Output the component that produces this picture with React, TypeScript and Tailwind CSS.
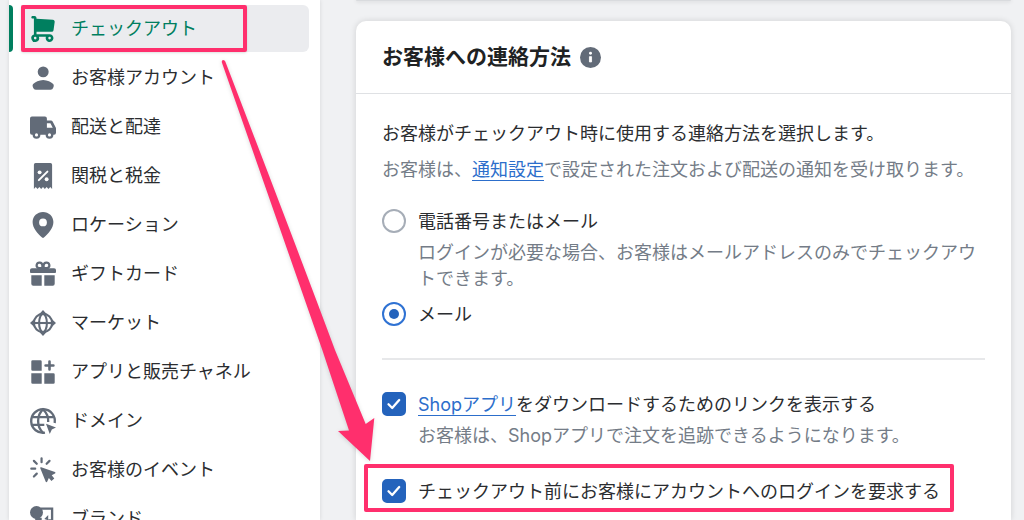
import React from "react";
import clsx from "clsx";

interface NavItem {
  label: string;
  icon: React.ReactNode;
  active?: boolean;
}

const navItems: NavItem[] = [
  {
    label: "チェックアウト",
    active: true,
    icon: (
      <path
        fillRule="evenodd"
        d="M1 1c0-.55.45-1 1-1h1.5C4.330 0 5 .67 5 1.500v.7l12.600.6c.9.05 1.500.850 1.400 1.700l-.9 6.400a1.500 1.500 0 0 1-1.500 1.300H5V14h10.060a3 3 0 1 1-2.850 2H6.850A3 3 0 1 1 3 14.170V2H2C1.450 2 1 1.550 1 1zM14.060 17a1 1 0 1 0 2 0 1 1 0 0 0-2 0zM3 17a1 1 0 1 0 2 0 1 1 0 0 0-2 0z"
      />
    ),
  },
  {
    label: "お客様アカウント",
    icon: (
      <path d="M14.363 5.22a4.22 4.22 0 1 1-8.439 0 4.22 4.22 0 0 1 8.439 0zM2.67 14.469c1.385-1.09 4.141-2.853 7.474-2.853 3.332 0 6.089 1.764 7.474 2.853.618.486.81 1.308.567 2.056l-.333 1.02a2.11 2.11 0 0 1-2.005 1.455h-11.406a2.11 2.11 0 0 1-2.005-1.455l-.333-1.02c-.245-.748-.052-1.57.567-2.056z" />
    ),
  },
  {
    label: "配送と配達",
    icon: (
      <path
        fillRule="evenodd"
        d="M1.5 2A1.5 1.5 0 0 0 0 3.5v11A1.5 1.5 0 0 0 1.5 16H2a3 3 0 1 0 6 0h4a3 3 0 1 0 6 0h.5a1.5 1.5 0 0 0 1.5-1.5v-3.4a2 2 0 0 0-.2-.8l-2.4-4.5A1.5 1.5 0 0 0 16 5h-3V3.5A1.5 1.5 0 0 0 11.5 2zM13 7.2h2.7l1.8 3.3H13zM5 14.9a1.2 1.2 0 1 1 0 2.4 1.2 1.2 0 0 1 0-2.4zM15 14.9a1.2 1.2 0 1 1 0 2.4 1.2 1.2 0 0 1 0-2.4z"
      />
    ),
  },
  {
    label: "関税と税金",
    icon: (
      <>
        <path d="M3 1.3A1.3 1.3 0 0 1 4.3 0h11.4A1.3 1.3 0 0 1 17 1.3V20l-1.4-1.5L14.2 20l-1.4-1.5L11.4 20 10 18.5 8.6 20l-1.4-1.5L5.8 20l-1.4-1.5L3 20z" />
        <path d="M13.4 6.6 6.8 13.2" stroke="#fff" strokeWidth="1.5" strokeLinecap="round" />
        <circle cx="7.4" cy="7.2" r="1.5" fill="#fff" />
        <circle cx="12.8" cy="12.5" r="1.5" fill="#fff" />
      </>
    ),
  },
  {
    label: "ロケーション",
    icon: (
      <path
        fillRule="evenodd"
        d="M10 0C5.6 0 2 3.3 2 7.7 2 12.5 5.8 16.4 9.3 19.7a1 1 0 0 0 1.4 0C14.2 16.4 18 12.5 18 7.7 18 3.3 14.4 0 10 0zm0 11a3 3 0 1 1 0-6 3 3 0 0 1 0 6z"
      />
    ),
  },
  {
    label: "ギフトカード",
    icon: (
      <>
        <path d="M9.5 5.5H6.5A2.2 2.2 0 1 1 9.5 3.3zM10.5 5.5h3a2.2 2.2 0 1 0-3-2.2z" fill="none" stroke="currentColor" strokeWidth="1.7" />
        <path d="M1.5 5.5h17A1.5 1.5 0 0 1 20 7v1.5a.7.7 0 0 1-.7.7H.7A.7.7 0 0 1 0 8.5V7a1.5 1.5 0 0 1 1.5-1.5zM1 11h8v8H2.5A1.5 1.5 0 0 1 1 17.5zM11 11h8v6.5a1.5 1.5 0 0 1-1.5 1.5H11z" />
      </>
    ),
  },
  {
    label: "マーケット",
    icon: (
      <>
        <g fill="none" stroke="currentColor" strokeWidth="1.6">
          <circle cx="10" cy="10" r="7" />
          <ellipse cx="10" cy="10" rx="3" ry="7" />
          <path d="M2 10h16" />
        </g>
        <path d="m10 0 3 3.3H7zM10 20l3-3.3H7zM0 10l3.3-3v6zM20 10l-3.3-3v6z" />
      </>
    ),
  },
  {
    label: "アプリと販売チャネル",
    icon: (
      <path d="M2 1h6a1 1 0 0 1 1 1v7H2a1 1 0 0 1-1-1V2a1 1 0 0 1 1-1zM1 11h8v8H2a1 1 0 0 1-1-1zM11 11h7a1 1 0 0 1 1 1v6a1 1 0 0 1-1 1h-7zM14 2a1 1 0 1 1 2 0v2h2a1 1 0 1 1 0 2h-2v2a1 1 0 1 1-2 0V6h-2a1 1 0 1 1 0-2h2z" />
    ),
  },
  {
    label: "ドメイン",
    icon: (
      <>
        <g fill="none" stroke="currentColor" strokeWidth="1.8">
          <path d="M19 11.5A9.1 9.1 0 1 0 11.5 19" />
          <path d="M10 19c-5-4.5-5-13.5 0-18 3 2.7 4.2 6 4 9.8M1.8 7h16.4M1.8 13H11" />
        </g>
        <path d="M12.3 12.2 20 15l-3.2 1.5L15.2 20z" />
      </>
    ),
  },
  {
    label: "お客様のイベント",
    icon: (
      <>
        <path d="M8.9 1v3M3 3l2.2 2.2M15 3l-2.2 2.2M1 9h3M3 15l2.2-2.2" stroke="currentColor" strokeWidth="1.7" strokeLinecap="round" />
        <path d="M8.6 7.8 19.2 11.6a.6.6 0 0 1 0 1.1L16.7 14l2 2.5-2.2 2-2-2.4-1.3 3a.6.6 0 0 1-1.1 0L7.9 8.6a.6.6 0 0 1 .7-.8z" />
      </>
    ),
  },
  {
    label: "ブランド",
    icon: (
      <>
        <circle cx="5" cy="5" r="5" />
        <path d="M8 2h9v9h-3" fill="none" stroke="currentColor" strokeWidth="1.8" />
        <path d="M11 10l3-3v4zM4 9h5v8H4zM11 12h8v7h-8z" />
      </>
    ),
  },
];

function SideNav() {
  return (
    <aside className="ml-[9px] w-[311px] shrink-0 bg-white shadow-[0_0_4px_rgba(23,24,24,0.12)]">
      <nav className="flex flex-col gap-[2px] pt-[5px] pr-[11px]">
        {navItems.map((item) => (
          <div key={item.label} className="flex h-[47px] gap-2">
            <span className={clsx("w-1 rounded-r-sm", item.active && "bg-[#007f5f]")} />
            <a
              href="#"
              className={clsx(
                "relative flex flex-1 items-center gap-[15px] rounded-r-md pt-px pl-[9px]",
                item.active ? "bg-[#ebecef] text-[#007f5f]" : "text-[#2b2d30]"
              )}
            >
              <svg
                viewBox="0 0 20 20"
                aria-hidden="true"
                className={clsx("size-[26px] shrink-0 overflow-visible fill-current", !item.active && "text-[#626b78]")}
              >
                {item.icon}
              </svg>
              {item.label}
              {item.active && (
                <span className="absolute inset-y-0 left-0 w-[226px] rounded-xs border-4 border-[#ff2f6d] shadow-sm" />
              )}
            </a>
          </div>
        ))}
      </nav>
    </aside>
  );
}

interface OptionProps {
  id: string;
  label: React.ReactNode;
  help?: string;
  defaultChecked?: boolean;
}

function RadioOption({ id, label, help, defaultChecked }: OptionProps) {
  return (
    <div className="flex gap-3">
      <input
        type="radio"
        id={id}
        name="contact"
        defaultChecked={defaultChecked}
        className="flex size-6 shrink-0 appearance-none items-center justify-center rounded-full border-2 border-[#a6adb7] bg-white checked:border-[#2f72d3] checked:before:size-[10px] checked:before:rounded-full checked:before:bg-[#2463bc]"
      />
      <div className="flex flex-col gap-[5px]">
        <label htmlFor={id}>{label}</label>
        {help && <p className="text-[#747c87]">{help}</p>}
      </div>
    </div>
  );
}

function CheckOption({ id, label, help, defaultChecked }: OptionProps) {
  return (
    <div className="flex gap-3">
      <div className="relative size-6 shrink-0">
        <input
          type="checkbox"
          id={id}
          defaultChecked={defaultChecked}
          className="peer block size-6 appearance-none rounded-[5px] border-2 border-[#aeb4bd] checked:border-[#2463bc] checked:bg-[#2463bc]"
        />
        <svg viewBox="0 0 24 24" className="pointer-events-none absolute inset-0 hidden peer-checked:block" aria-hidden="true">
          <path d="M6.5 12.3l3.7 3.7 7-8" fill="none" stroke="#fff" strokeWidth="2.3" strokeLinecap="round" strokeLinejoin="round" />
        </svg>
      </div>
      <div className="flex flex-col gap-[5px]">
        <label htmlFor={id}>{label}</label>
        {help && <p className="text-[#747c87]">{help}</p>}
      </div>
    </div>
  );
}

function ContactCard() {
  return (
    <section className="flex-1 rounded-t-[10px] bg-white shadow-[0_0_6px_rgba(23,24,24,0.14)]">
      <header className="flex h-[73px] items-center gap-[9px] border-b border-[#dfe1e4] px-[26px]">
        <h2 className="text-[21px] font-bold text-[#202223]">お客様への連絡方法</h2>
        <svg viewBox="0 0 20 20" className="size-[21px] shrink-0" aria-hidden="true">
          <circle cx="10" cy="10" r="10" fill="#626b78" />
          <path d="M9 9.2h2v5H9z" fill="#fff" stroke="#fff" strokeWidth=".8" strokeLinejoin="round" />
          <circle cx="10" cy="6" r="1.4" fill="#fff" />
        </svg>
      </header>

      <div className="flex flex-col px-[26px] pt-[27px]">
        <p>お客様がチェックアウト時に使用する連絡方法を選択します。</p>
        <p className="mt-[10px] text-[#747c87]">
          お客様は、<a href="#" className="text-[#2c6ecb] underline underline-offset-4">通知設定</a>で設定された注文および配送の通知を受け取ります。
        </p>

        <div className="mt-[26px] flex flex-col gap-[10px]">
          <RadioOption
            id="phone-or-email"
            label="電話番号またはメール"
            help="ログインが必要な場合、お客様はメールアドレスのみでチェックアウトできます。"
          />
          <RadioOption id="email" label="メール" defaultChecked />
        </div>

        <hr className="mt-[30px] mb-8 border-t-2 border-[#e7e8ea]" />

        <div className="flex flex-col gap-[30px]">
          <CheckOption
            id="shop-app"
            defaultChecked
            label={
              <>
                <a href="#" className="text-[#2c6ecb] underline underline-offset-4">Shopアプリ</a>をダウンロードするためのリンクを表示する
              </>
            }
            help="お客様は、Shopアプリで注文を追跡できるようになります。"
          />
          <div className="relative">
            <CheckOption
              id="require-login"
              defaultChecked
              label="チェックアウト前にお客様にアカウントへのログインを要求する"
            />
            <span className="pointer-events-none absolute -top-[15px] -left-[18px] h-12 w-[590px] rounded-xs border-4 border-[#ff2f6d]" />
          </div>
        </div>
      </div>
    </section>
  );
}

export default function App() {
  return (
    <div
      lang="ja"
      className="relative flex h-screen overflow-hidden bg-[#f0f1f3] font-['Inter','Noto_Sans_CJK_JP',sans-serif] text-[18px] leading-[26px] text-[#2b2d30]"
    >
      <SideNav />
      <main className="flex min-w-0 flex-1 flex-col gap-5 pr-[13px] pl-9">
        {/* bottom edge of the previous card */}
        <div className="h-px shrink-0 rounded-b-[10px] bg-[#d9dbde] shadow-[0_0_4px_rgba(23,24,24,0.3)]" />
        <ContactCard />
      </main>

      {/* Arrow from the menu item to the login option */}
      <svg viewBox="0 0 160 410" className="pointer-events-none absolute top-[56px] left-[220px] h-[410px] w-[160px] drop-shadow-sm" aria-hidden="true">
        <path d="M1.7 6Q1.700 4 3.300 4Q4.700 4 5.300 5.500Q80 200 115 294L145.700 368l8.600-6L150 405l-32-30 11-.5L102.300 294Z" fill="#ff2f6d" />
      </svg>
    </div>
  );
}
